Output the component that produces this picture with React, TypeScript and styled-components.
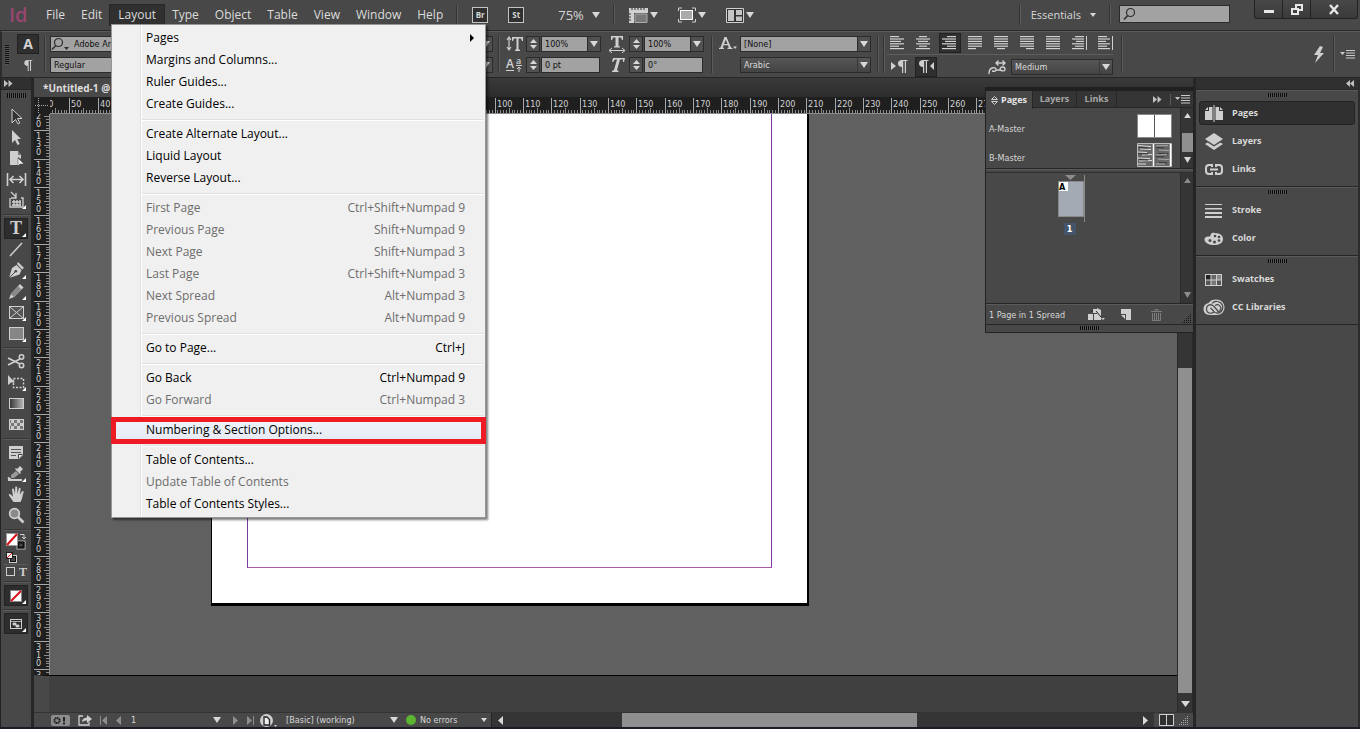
import React from "react";
import styled, { createGlobalStyle, css } from "styled-components";

const ui = `"Open Sans", "Noto Sans", sans-serif`;
const small = `"DejaVu Sans Condensed", "DejaVu Sans", sans-serif`;

const GlobalStyle = createGlobalStyle`
  * { box-sizing: border-box; }
  body { margin: 0; background: #484848; }
  button, input, select { font: inherit; color: inherit; margin: 0; padding: 0; border: 0; background: none; border-radius: 0; }
  button { display: flex; align-items: center; justify-content: center; }
  svg { display: block; flex: none; overflow: visible; }
`;

const App_ = styled.div`
  position: relative;
  display: flex;
  flex-direction: column;
  min-height: 100vh;
  background: #484848;
  color: #d6d6d6;
  font: 12px/16px ${ui};
  overflow: hidden;
  border-bottom: 2px solid #1b1c26;
`;

/* ---------- menu bar ---------- */
const MenuBar = styled.header`
  display: flex;
  align-items: center;
  height: 31px;
  border-bottom: 1px solid #2a2a2a;
`;
const Logo = styled.div`
  width: 38px;
  padding-left: 9px;
  font: 600 20px/28px "Open Sans", sans-serif;
  color: #97476f;
`;
const MenuButton = styled.button<{ $open?: boolean }>`
  height: 20px;
  padding: 0 8px;
  color: #dcdcdc;
  ${(p) => p.$open && css`background: #303030; box-shadow: 0 0 0 1px #272727;`}
`;
const Divider = styled.span<{ $h?: number; $m?: string }>`
  flex: none;
  width: 2px;
  height: ${(p) => p.$h ?? 20}px;
  margin: ${(p) => p.$m ?? "0"};
  background: linear-gradient(to right, #343434 50%, #5c5c5c 50%);
`;
const AppBadge = styled.button`
  width: 16px;
  height: 16px;
  margin-right: 20px;
  border: 1px solid #c4c4c4;
  background: #303030;
  font: 700 8px/12px ${ui};
`;
const BarButton = styled.button`
  height: 20px;
  margin-right: 20px;
  gap: 2px;
`;
const Zoom = styled.button`
  gap: 8px;
  height: 20px;
  margin: 0 13px 0 14px;
  font-size: 13px;
`;
const Spacer = styled.div`
  flex: 1;
`;
const Workspace = styled.button`
  gap: 9px;
  height: 20px;
  margin: 0 13px 0 10px;
  font-size: 11px;
`;
const SearchBox = styled.label`
  display: flex;
  align-items: center;
  width: 111px;
  height: 18px;
  margin: 0 24px 3px 8px;
  padding-left: 3px;
  background: #a2a2a2;
  border: 1px solid #2b2b2b;
  input { flex: 1; min-width: 0; height: 14px; color: #111; outline: 0; }
`;
const WindowButtons = styled.div`
  display: flex;
  align-self: flex-start;
  width: 104px;
  height: 19px;
  margin-right: 2px;
  border: 1px solid #222;
  border-top: 0;
  border-radius: 0 0 3px 3px;
  background: linear-gradient(#484848, #3a3a3a);
  button { flex: 27; height: 18px; border-left: 1px solid #222; }
  button:first-child { border-left: 0; }
  button:last-child { flex: 46; }
`;

/* ---------- control bar ---------- */
const ControlBar = styled.section`
  display: flex;
  align-items: center;
  height: 47px;
  border-top: 1px solid #5a5a5a;
  border-bottom: 1px solid #262626;
  border-left: 2px solid #2c2c2c;
  font: 9px/12px ${small};
`;
const Stack = styled.div<{ $w?: number; $gap?: number; $ml?: number }>`
  display: flex;
  flex-direction: column;
  flex: none;
  gap: ${(p) => p.$gap ?? 5}px;
  width: ${(p) => (p.$w ? `${p.$w}px` : "auto")};
  margin-left: ${(p) => p.$ml ?? 0}px;
`;
const Line = styled.div`
  display: flex;
  align-items: center;
  height: 16px;
`;
const Glyph = styled.span<{ $w: number }>`
  display: flex;
  flex: none;
  justify-content: center;
  width: ${(p) => p.$w}px;
`;
const GripV = styled.span`
  width: 4px;
  height: 20px;
  margin: 0 8px 0 3px;
  background: repeating-linear-gradient(#111 0 1px, #555 1px 2px);
`;
const ModeButton = styled.button<{ $on?: boolean; $w?: number }>`
  flex: none;
  width: ${(p) => p.$w ?? 22}px;
  height: 20px;
  font: 700 14px/18px ${ui};
  color: #d2d2d2;
  ${(p) => p.$on && css`background: #2f2f2f; border: 1px solid #222;`}
`;
const Field = styled.span<{ $w: number; $dark?: boolean }>`
  position: relative;
  display: flex;
  flex: none;
  align-items: center;
  width: ${(p) => p.$w}px;
  height: 16px;
  border: 1px solid #2b2b2b;
  color: ${(p) => (p.$dark ? "#dcdcdc" : "#101010")};
  background: ${(p) => (p.$dark ? "linear-gradient(#565656, #444)" : "#a2a2a2")};
  input, select { appearance: none; flex: 1; min-width: 0; height: 14px; padding: 0 3px; outline: 0; }
`;
const DropArrow = styled.span<{ $dark?: boolean }>`
  display: flex;
  align-items: center;
  justify-content: center;
  width: 13px;
  height: 14px;
  border-left: 1px solid ${(p) => (p.$dark ? "#3a3a3a" : "#2b2b2b")};
  background: ${(p) => (p.$dark ? "none" : "#505050")};
  pointer-events: none;
`;
const Stepper = styled.span`
  display: flex;
  align-items: center;
  justify-content: center;
  width: 14px;
  height: 16px;
  margin-right: 1px;
  border: 1px solid #2b2b2b;
  background: #505050;
`;
const AlignBlock = styled.div`
  display: flex;
  flex-direction: column;
  flex: none;
  width: 230px;
  margin-left: 2px;
`;
const AlignRow = styled.div`
  display: flex;
  align-items: center;
  height: 21px;
  gap: 4px;
`;
const RowRule = styled.hr`
  width: 226px;
  height: 1px;
  margin: 1px 0;
  border: 0;
  background: #5e5e5e;
`;

/* ---------- work area ---------- */
const Body = styled.div`
  display: flex;
  flex: 1;
`;
const Tools = styled.nav`
  display: flex;
  flex-direction: column;
  align-items: center;
  flex: none;
  width: 34px;
  border-left: 1px solid #222;
  border-right: 3px solid #262626;
`;
const PanelHead = styled.div<{ $end?: boolean }>`
  display: flex;
  align-items: center;
  align-self: stretch;
  justify-content: ${(p) => (p.$end ? "flex-end" : "flex-start")};
  height: 12px;
  padding: 0 3px;
  background: #303030;
  border-bottom: 1px solid #262626;
`;
const GripH = styled.span`
  display: block;
  width: 19px;
  height: 5px;
  margin: 3px auto;
  background: repeating-linear-gradient(to right, #0c0c0c 0 1px, #555 1px 2px);
`;
const ToolGap = styled.span`
  height: 5px;
`;
const ToolRule = styled.hr`
  width: 27px;
  height: 2px;
  margin: 3px 0 2px;
  border: 0;
  background: linear-gradient(#373737 50%, #5a5a5a 50%);
`;
const ToolButton = styled.button<{ $on?: boolean }>`
  width: 24px;
  height: 21px;
  ${(p) => p.$on && css`background: #2d2d2d; border: 1px solid #222;`}
`;
const ColorTools = styled.div`
  display: flex;
  flex-direction: column;
  align-items: center;
`;
const Doc = styled.main`
  display: flex;
  flex-direction: column;
  flex: 1;
  min-width: 0;
`;
const TabBar = styled.div`
  display: flex;
  height: 19px;
  background: linear-gradient(#3a3a3a, #2c2c2c);
`;
const DocTab = styled.button`
  width: 300px;
  height: 19px;
  padding-left: 9px;
  justify-content: flex-start;
  background: #484848;
  font: 700 10px/18px ${ui};
  color: #dedede;
  white-space: nowrap;
`;
const RulerRow = styled.div`
  display: flex;
  height: 17px;
  background: #1f1f1f;
`;
const Corner = styled.div`
  flex: none;
  width: 16px;
  height: 17px;
`;
const HRuler = styled.div`
  flex: 1;
  min-width: 0;
  overflow: hidden;
  border-bottom: 1px solid #8c8c8c;
  svg { width: 100%; }
`;
const CanvasRow = styled.div`
  display: flex;
  flex: 1;
`;
const DocColumn = styled.div`
  display: flex;
  flex-direction: column;
  flex: 1;
  min-width: 0;
`;
const VRuler = styled.div`
  position: relative;
  flex: none;
  width: 16px;
  overflow: hidden;
  background: #1f1f1f;
  border-right: 1px solid #8c8c8c;
  svg { position: absolute; }
`;
const Canvas = styled.div`
  position: relative;
  flex: 1;
  min-height: 520px;
  overflow: hidden;
  background: #606060;
`;
const PageSheet = styled.div`
  position: absolute;
  left: 161px;
  top: 0;
  width: 598px;
  height: 492px;
  padding: 0 35px 35px 35px;
  background: #fff;
  border: solid #000;
  border-width: 0 2px 3px 1px;
`;
const MarginGuide = styled.div`
  height: 100%;
  border: 1px solid #7d3c9c;
  border-bottom-color: #a95aa9;
  border-top: 0;
`;
const Below = styled.div`
  height: 37px;
  border-left: 15px solid #484848;
  border-top: 1px solid #000;
  background: #404040;
`;
const VScroll = styled.div`
  display: flex;
  flex-direction: column;
  align-items: center;
  flex: none;
  width: 16px;
  padding-bottom: 5px;
  background: #353535;
  border-left: 1px solid #2a2a2a;
  border-right: 1px solid #2a2a2a;
`;
const VThumb = styled.div`
  width: 14px;
  height: 325px;
  margin: auto 0 8px;
  background: #8f8f8f;
`;
const StatusBar = styled.footer`
  display: flex;
  align-items: center;
  height: 15px;
  padding-left: 16px;
  border-top: 1px solid #333;
  font: 9px/12px ${small};
  button { height: 14px; }
`;
const StatusSelect = styled.span<{ $w: number }>`
  display: flex;
  flex: none;
  align-items: center;
  width: ${(p) => p.$w}px;
  select { appearance: none; flex: 1; min-width: 0; outline: 0; }
`;
const StatusIcon = styled.button<{ $w: number }>`
  flex: none;
  width: ${(p) => p.$w}px;
`;
const GreenDot = styled.span`
  width: 10px;
  height: 10px;
  margin-right: 4px;
  border-radius: 50%;
  background: #5cb531;
`;
const HScroll = styled.div`
  display: flex;
  align-items: center;
  flex: 1;
  height: 14px;
  padding: 0 4px;
  background: #353535;
  border-left: 1px solid #222;
`;
const HTrack = styled.div`
  display: flex;
  flex: 1;
  height: 14px;
  margin: 0 4px;
`;
const HThumb = styled.div`
  flex: 0 0 47%;
  margin-left: 18%;
  background: #8f8f8f;
`;

/* ---------- right dock ---------- */
const Dock = styled.aside`
  flex: none;
  width: 167px;
  border-left: 3px solid #262626;
  border-right: 2px solid #2c2c2c;
`;
const DockGroup = styled.section`
  display: flex;
  flex-direction: column;
  padding-bottom: 3px;
  border-top: 1px solid #5a5a5a;
  border-bottom: 1px solid #262626;
  > span { margin: 2px auto; height: 4px; }
`;
const DockItem = styled.button<{ $on?: boolean }>`
  width: calc(100% - 6px);
  height: 24px;
  margin: 2px 3px;
  padding-left: 4px;
  gap: 8px;
  justify-content: flex-start;
  border: 1px solid transparent;
  border-radius: 3px;
  font: 700 9px/20px ${ui};
  color: #dadada;
  ${(p) => p.$on && css`background: #303030; border-color: #232323;`}
`;

/* ---------- floating Pages panel ---------- */
const PagesPanel = styled.section`
  position: absolute;
  top: 87px;
  right: 166px;
  width: 209px;
  border: 1px solid #222;
  border-top: 4px solid #202020;
  background: #484848;
  font: 9px/12px ${small};
`;
const PanelTabs = styled.div`
  display: flex;
  align-items: center;
  height: 17px;
  background: #353535;
  border-bottom: 1px solid #262626;
`;
const PanelTab = styled.button<{ $on?: boolean; $w: number }>`
  width: ${(p) => p.$w}px;
  height: 17px;
  gap: 3px;
  border-right: 1px solid #262626;
  font: 700 9px/16px ${ui};
  color: ${(p) => (p.$on ? "#e6e6e6" : "#a8a8a8")};
  ${(p) => p.$on && css`background: #484848; align-self: flex-start; height: 18px;`}
`;
const PanelPane = styled.div<{ $h: number }>`
  display: flex;
  height: ${(p) => p.$h}px;
  border-bottom: 1px solid #262626;
`;
const MasterList = styled.ul`
  display: flex;
  flex: 1;
  flex-direction: column;
  gap: 5px;
  margin: 0;
  padding: 6px 8px 0 3px;
  list-style: none;
  li { display: flex; align-items: center; justify-content: space-between; height: 24px; }
  span { padding-top: 5px; }
`;
const PanelScroll = styled.div`
  display: flex;
  flex-direction: column;
  align-items: center;
  justify-content: space-between;
  width: 13px;
  padding: 5px 0;
  background: #353535;
  border-left: 1px solid #2a2a2a;
`;
const PanelThumb = styled.div`
  width: 11px;
  height: 19px;
  margin-top: 9px;
  background: #8f8f8f;
`;
const PanelSplit = styled.div`
  height: 4px;
  border-bottom: 1px solid #303030;
  border-top: 1px solid #5a5a5a;
`;
const SpreadArea = styled.div`
  display: flex;
  flex: 1;
  flex-direction: column;
  align-items: center;
  padding: 2px 23px 0 0;
`;
const PageNumber = styled.span`
  width: 12px;
  height: 12px;
  margin: 1px 4px 0 0;
  background: #44546a;
  font: 700 9px/12px ${small};
  color: #fff;
  text-align: center;
`;
const PanelFoot = styled.div`
  display: flex;
  align-items: center;
  height: 20px;
  padding: 0 1px 0 3px;
  border-top: 1px solid #5a5a5a;
  button { height: 18px; width: 30px; }
`;
const SpreadInfo = styled.span`
  flex: 1;
  white-space: nowrap;
`;
const FootEnd = styled.span`
  display: flex;
  align-self: flex-end;
  margin-left: 10px;
`;
const PanelGrip = styled.div`
  height: 8px;
  border-top: 1px solid #262626;
  padding-top: 1px;
  > span { margin: 0 auto; height: 4px; }
`;

/* ---------- drop-down menu ---------- */
const Menu = styled.div`
  position: absolute;
  top: 24px;
  left: 111px;
  width: 375px;
  padding: 2px;
  border: 1px solid #979797;
  background: linear-gradient(to right, transparent 28px, #e0e0e0 28px 29px, #fff 29px 30px, transparent 30px) #f0f0f0;
  box-shadow: 2px 2px 2px rgba(0, 0, 0, 0.5);
  color: #000;
`;
const MenuItem = styled.button<{ $hot?: boolean }>`
  width: 100%;
  height: 22px;
  padding: 0 18px 0 32px;
  justify-content: space-between;
  &:disabled { color: #6d6d6d; }
  ${(p) => p.$hot && css`position: relative; background: linear-gradient(#f0f3f9, #e4eaf5);`}
`;
const SubArrow = styled.span`
  display: flex;
  margin-right: -10px;
`;
const MenuRule = styled.hr`
  height: 2px;
  margin: 4px 0 2px 28px;
  border: 0;
  background: linear-gradient(#e0e0e0 50%, #fff 50%);
`;
const Highlight = styled.span`
  position: absolute;
  inset: -2px -3px -3px -3px;
  border: 5px solid #ed1c24;
`;

/* ---------- small drawings ---------- */
const Down = ({ w = 8, c = "#d8d8d8" }: { w?: number; c?: string }) => (
  <svg width={w} height={w > 6 ? 6 : 4} viewBox="0 0 8 6" preserveAspectRatio="none"><path d="M0 0h8L4 6z" fill={c} /></svg>
);
const Up = ({ c = "#d8d8d8" }: { c?: string }) => (
  <svg width="7" height="5" viewBox="0 0 8 6"><path d="M0 6h8L4 0z" fill={c} /></svg>
);
const Side = ({ left, bar, c = "#d8d8d8" }: { left?: boolean; bar?: boolean; c?: string }) => (
  <svg width="9" height="9" viewBox="0 0 9 9" fill={c}>
    {left ? <path d="M7 0v9L2 4.500z" /> : <path d="M2 0v9l5-4.500z" />}
    {bar && (left ? <path d="M0 0h1v9H0z" /> : <path d="M8 0h1v9H8z" />)}
  </svg>
);
const Chevrons = ({ left }: { left?: boolean }) => (
  <svg width="9" height="7" viewBox="0 0 9 7" fill="#c2c2c2">
    <path d={left ? "M4 0v7L0 3.500zM8 0v7L4 3.500z" : "M0 0v7l4-3.500zM4.500 0v7l4-3.500z"} />
  </svg>
);
const PanelMenuIcon = () => (
  <svg width="15" height="9" viewBox="0 0 15 9" fill="#c9c9c9">
    <path d="M0 2h5L2.500 5zM6 0h9v1H6zM6 2.500h9v1H6zM6 5h9v1H6zM6 7.500h9v1H6z" />
  </svg>
);
const StepIcon = () => (
  <svg width="7" height="12" viewBox="0 0 7 12" fill="#d8d8d8"><path d="M0 5h7L3.500 1zM0 7h7l-3.500 4z" /></svg>
);
const Magnifier = ({ arrow }: { arrow?: boolean }) => (
  <svg width={arrow ? 20 : 14} height="14" viewBox={arrow ? "0 0 20 14" : "0 0 14 14"} fill="none" stroke="#2c2c2c" strokeWidth="1.200">
    <circle cx="7.500" cy="5.500" r="4" />
    <path d="M4.800 8.500L1 12.500" strokeWidth="1.500" />
    {arrow && <path d="M13 10h5l-2.500 3z" fill="#2c2c2c" stroke="none" />}
  </svg>
);
const Resize = ({ c = "#151515" }: { c?: string }) => (
  <svg width="11" height="11" viewBox="0 0 11 11" fill={c} stroke="none">
    {[0, 1, 2, 3, 4].map((r) => Array.from({ length: r + 1 }, (_, i) => <rect key={`${r}-${i}`} x={9 - i * 2} y={r * 2 + 1} width="1" height="1" />))}
  </svg>
);

const alignWidths: Record<string, number[]> = {
  left: [9, 14, 11, 14, 9, 14],
  center: [8, 14, 10, 14, 8, 14],
  right: [9, 14, 11, 14, 9, 14],
  jleft: [14, 14, 14, 14, 14, 8],
  jcenter: [14, 14, 14, 14, 14, 8],
  jright: [14, 14, 14, 14, 14, 8],
  full: [14, 14, 14, 14, 14, 14],
  towards: [9, 12, 8, 12, 9, 12],
  away: [9, 12, 8, 12, 9, 12],
};
const AlignIcon = ({ kind }: { kind: string }) => (
  <svg width="16" height="14" viewBox="0 0 16 14" fill="#d0d0d0">
    {alignWidths[kind].map((w, i) => {
      const x = kind.includes("center") ? (14 - w) / 2 : kind === "right" || kind === "jright" ? 14 - w : kind === "towards" ? 12 - w : 0;
      return <rect key={i} x={x} y={i * 2.4} width={w} height="1.200" />;
    })}
    {(kind === "towards" || kind === "away") && <rect x="14" y="0" width="1" height="14" />}
  </svg>
);

const ink = "#cfcfcf";
const toolIcons: Record<string, React.ReactNode> = {
  Selection: <path d="M7 3v14l3.500-3.500L13 18l1.800-1L12.500 12.500H17z" fill="#333" stroke={ink} />,
  "Direct Selection": <path d="M7 3v13l3-3 2.500 5 2.200-1L12.300 12H16z" fill={ink} />,
  Page: <><path d="M5 3h8l3 4v4l-3-2v8H5z" fill={ink} /><path d="M13 3l3 4h-3z" fill="#777" /><path d="M13 10v8l2-2h4z" fill="#eee" stroke="#444" strokeWidth=".500" /></>,
  Gap: <path d="M2.500 4v13M20.500 4v13M5 10.500h13M8.500 7L5 10.500 8.500 14M14.500 7l3.500 3.500-3.500 3.500" fill="none" stroke={ink} strokeWidth="1.600" />,
  "Content Collector": <path d="M6 2l5 5M11 3v5H6M5 8v9h13V8h-2M7 12h9M7 15h9M9 10v6M12 10v6M15 10v6" fill="none" stroke={ink} strokeWidth="1.300" />,
  Type: <text x="11" y="16" textAnchor="middle" fontFamily="Liberation Serif, serif" fontSize="18" fontWeight="700" fill={ink}>T</text>,
  Line: <path d="M5 17L17 4" stroke={ink} strokeWidth="1.500" />,
  Pen: <><path d="M13 2l6 6-2 1.500-5-5.500z" fill={ink} /><path d="M11.500 5l5 5-2 4.500L4 18 7 8z" fill={ink} /><path d="M4 18l6-6" stroke="#444" /><circle cx="10.800" cy="11.200" r="1.300" fill="#444" /></>,
  Pencil: <><path d="M15 3l3.500 3.500L9 16l-5 2 2-5z" fill={ink} /><path d="M13 5l3.500 3.500L9 16l-3.500-3z" fill="#8a8a8a" /></>,
  "Rectangle Frame": <><rect x="4.500" y="4.500" width="14" height="12" fill="#555" stroke={ink} /><path d="M5 5l13 11M18 5L5 16" stroke={ink} /></>,
  Rectangle: <rect x="4.500" y="4.500" width="14" height="12" fill="#868686" stroke={ink} />,
  Scissors: <g fill="none" stroke={ink} strokeWidth="1.600"><path d="M3 7l12 6M3 14l12-6" /><circle cx="16.500" cy="6" r="2.200" /><circle cx="16.500" cy="14.500" r="2.200" /></g>,
  "Free Transform": <><rect x="8.500" y="6.500" width="10" height="9" fill="none" stroke={ink} strokeWidth="1.500" strokeDasharray="2 1.500" /><path d="M3 3v10l3-2.500h4z" fill={ink} /></>,
  "Gradient Swatch": <><rect x="4.500" y="5.500" width="14" height="10" fill="url(#grad)" stroke={ink} /></>,
  "Gradient Feather": <><rect x="4" y="5" width="15" height="11" fill="#777" /><rect x="4" y="5" width="15" height="11" fill="url(#check)" /><rect x="4.500" y="5.500" width="14" height="10" fill="none" stroke={ink} /></>,
  Note: <><path d="M4 4h14v9l-4 4H4z" fill={ink} /><path d="M6 7.500h10M6 10.500h10M6 13.500h5" stroke="#555" /><path d="M13 17v-5h5z" fill="#444" /><path d="M14 16v-3h3z" fill="#eee" /></>,
  Eyedropper: <><path d="M15 3l3 3-3 3 1 1-1 1-5-5 1-1 1 1z" fill={ink} /><path d="M11 8l3 3-5 4H6v-3z" fill="#999" /><path d="M3 17h14M3 14.500l3 2.500" stroke={ink} strokeWidth="2" /></>,
  Hand: <path d="M8.500 18L4 11.500c-1-1.500 1-2 2-.800l2 2L7 5.500c0-1.300 1.800-1.300 2 0l1 4.500.200-6.500c0-1.200 2-1.200 2 0l.300 6.500 1.300-5.500c.300-1.200 2-.800 1.800.400L15 10.500l2-3c.800-1 2-.300 1.600.800C17.500 11 17.500 15 15.500 18z" fill={ink} />,
  Zoom: <><circle cx="9.500" cy="8.500" r="4.800" fill="#8a8a8a" stroke={ink} strokeWidth="1.800" /><path d="M13 12l5.500 5.500" stroke={ink} strokeWidth="2.600" /></>,
};
const flyouts = ["Content Collector", "Type", "Pen", "Pencil", "Rectangle Frame", "Rectangle", "Free Transform", "Eyedropper"];
const toolGroups = [
  ["Selection", "Direct Selection", "Page", "Gap", "Content Collector"],
  ["Type", "Line", "Pen", "Pencil", "Rectangle Frame", "Rectangle"],
  ["Scissors", "Free Transform", "Gradient Swatch", "Gradient Feather"],
  ["Note", "Eyedropper", "Hand", "Zoom"],
];
const ToolIcon = ({ name }: { name: string }) => (
  <svg width="22" height="21" viewBox="0 0 22 21">
    {toolIcons[name]}
    {flyouts.includes(name) && <path d="M21 15v4h-4z" fill="#fff" />}
  </svg>
);
const DefsSvg = styled.svg`
  position: absolute;
`;
const Defs = () => (
  <DefsSvg width="0" height="0">
    <defs>
      <linearGradient id="grad"><stop offset="0" stopColor="#333" /><stop offset="1" stopColor="#bbb" /></linearGradient>
      <pattern id="check" width="6" height="6" patternUnits="userSpaceOnUse"><path d="M0 0h3v3H0zM3 3h3v3H3z" fill="#ccc" /></pattern>
    </defs>
  </DefsSvg>
);
const NoneSwatch = () => (
  <svg width="22" height="20" viewBox="0 0 22 20">
    <rect x="5.500" y="4.500" width="11" height="11" fill="#fff" stroke="#888" /><path d="M6 15L16 5" stroke="#d80f16" strokeWidth="2" /><path d="M21 14v4h-4z" fill="#fff" />
  </svg>
);

const MM = 2.835;
const tickShape = (m: number) => (m % 10 === 0 ? 15 : m % 5 === 0 ? 5 : 3);
const HorizontalTicks = () => {
  const marks = Array.from({ length: 420 }, (_, i) => i - 60);
  return (
    <svg height="16" shapeRendering="crispEdges">
      {marks.map((m) => {
        const x = Math.round(162 + m * MM) - 1;
        const h = tickShape(m);
        return <rect key={m} x={x} y={16 - h} width="1" height={h} fill={h > 10 ? "#a8a8a8" : "#8c8c8c"} />;
      })}
      {marks.filter((m) => m % 10 === 0).map((m) => (
        <text key={m} x={Math.round(162 + m * MM) + 1} y="10" fontFamily="DejaVu Sans Condensed, sans-serif" fontSize="9" fill="#d2d2d2">{Math.abs(m)}</text>
      ))}
    </svg>
  );
};
const VerticalTicks = () => {
  const marks = Array.from({ length: 202 }, (_, i) => i + 120);
  const y = (m: number) => Math.round(470 + (m - 290) * MM);
  return (
    <svg width="15" height="562" shapeRendering="crispEdges">
      {marks.map((m) => {
        const h = tickShape(m);
        return <rect key={m} x={15 - h} y={y(m)} width={h} height="1" fill={h > 10 ? "#a8a8a8" : "#8c8c8c"} />;
      })}
      {marks.filter((m) => m % 10 === 0).map((m) => String(m).split("").map((d, i) => (
        <text key={`${m}-${i}`} x="2" y={y(m) + 9 + i * 8} fontFamily="DejaVu Sans Condensed, sans-serif" fontSize="9" fill="#d2d2d2">{d}</text>
      )))}
    </svg>
  );
};

type Entry = { label: string; keys?: string; off?: boolean; sub?: boolean; hot?: boolean };
const menuGroups: Entry[][] = [
  [{ label: "Pages", sub: true }, { label: "Margins and Columns..." }, { label: "Ruler Guides..." }, { label: "Create Guides..." }],
  [{ label: "Create Alternate Layout..." }, { label: "Liquid Layout" }, { label: "Reverse Layout..." }],
  [
    { label: "First Page", keys: "Ctrl+Shift+Numpad 9", off: true },
    { label: "Previous Page", keys: "Shift+Numpad 9", off: true },
    { label: "Next Page", keys: "Shift+Numpad 3", off: true },
    { label: "Last Page", keys: "Ctrl+Shift+Numpad 3", off: true },
    { label: "Next Spread", keys: "Alt+Numpad 3", off: true },
    { label: "Previous Spread", keys: "Alt+Numpad 9", off: true },
  ],
  [{ label: "Go to Page...", keys: "Ctrl+J" }],
  [{ label: "Go Back", keys: "Ctrl+Numpad 9" }, { label: "Go Forward", keys: "Ctrl+Numpad 3", off: true }],
  [{ label: "Numbering & Section Options...", hot: true }],
  [{ label: "Table of Contents..." }, { label: "Update Table of Contents", off: true }, { label: "Table of Contents Styles..." }],
];
const LayoutMenu = () => (
  <Menu role="menu" aria-label="Layout">
    {menuGroups.map((group, g) => (
      <React.Fragment key={g}>
        {g > 0 && <MenuRule />}
        {group.map((e) => (
          <MenuItem key={e.label} role="menuitem" disabled={e.off} $hot={e.hot}>
            <span>{e.label}</span>
            {e.keys && <span>{e.keys}</span>}
            {e.sub && <SubArrow><svg width="5" height="8" viewBox="0 0 5 8"><path d="M0 0v8l4-4z" fill="#000" /></svg></SubArrow>}
            {e.hot && <Highlight />}
          </MenuItem>
        ))}
      </React.Fragment>
    ))}
  </Menu>
);

const Picker = ({ label, value, w, dark }: { label: string; value: string; w: number; dark?: boolean }) => (
  <Field $w={w} $dark={dark}>
    <select aria-label={label} defaultValue={value}><option>{value}</option></select>
    <DropArrow $dark={dark}><Down /></DropArrow>
  </Field>
);
const Amount = ({ label, value, drop }: { label: string; value: string; drop?: boolean }) => (
  <>
    <Stepper><StepIcon /></Stepper>
    <Field $w={drop ? 60 : 59}>
      <input aria-label={label} defaultValue={value} />
      {drop && <DropArrow><Down /></DropArrow>}
    </Field>
  </>
);

const Pilcrow = ({ flip }: { flip?: boolean }) => (
  <svg width="17" height="13" viewBox="0 0 17 13" fill={ink}>
    {flip ? <path d="M16 2v8l-4-4z" /> : <path d="M0 2v8l5-4z" />}
    <path transform={flip ? "translate(-6 0)" : ""} d="M16.500 0v1H15v12h-1.200V1h-1.600v12H11V7C8.500 7 7 5.500 7 3.500S8.500 0 11 0z" />
  </svg>
);

const dockIcons: Record<string, React.ReactNode> = {
  Pages: <path d="M1 6l3-3v3zM5 3h3.500v13H1V7h4zM19 6l-3-3v3zM15 3h-3.500v13H19V7h-4zM9.500 1h1v17h-1z" fill={ink} />,
  Layers: <path d="M10 1l9 6-9 6-9-6zM3.500 10.500l6.500 4 6.500-4 2.500 1.500-9 6-9-6z" fill={ink} />,
  Links: <path d="M8 7V5H5Q2 5 2 8v3q0 3 3 3h3v-2M12 7V5h3q3 0 3 3v3q0 3-3 3h-3v-2M6 9.500h8" fill="none" stroke={ink} strokeWidth="2" />,
  Stroke: <path d="M1 3h17v1H1zM1 7h17v1.500H1zM1 11h17v2H1zM1 15h17v2H1z" fill={ink} />,
  Color: <><path d="M8 4c2-1 3 .500 5 .200 4 .500 6 3 6 5.800 0 4-4 6-9 6s-9.500-2-9.500-5.500C.500 8 3 7 5 7.500 7 8 6 5 8 4z" fill={ink} /><g fill="#484848"><circle cx="11" cy="7" r="1.300" /><circle cx="15" cy="8" r="1.300" /><circle cx="15" cy="11.500" r="1.300" /><circle cx="10.500" cy="13" r="1.500" /><circle cx="6" cy="11.500" r="1.500" /></g></>,
  Swatches: <><path d="M1 4h17v12H1z" fill={ink} /><path d="M2 5h4.500v4.500H2z" fill="#222" /><path d="M7.500 5H12v4.500H7.500z" fill="#666" /><path d="M13 5h4v4.500h-4z" fill="#888" /><path d="M2 10.500h4.500V15H2zM13 10.500h4V15h-4z" fill="#555" /><path d="M7.500 10.500H12V15H7.500z" fill="#777" /></>,
  "CC Libraries": <><path d="M6 17C1.500 17 -.500 14 -.500 11s2-5.500 5-6C6 2.500 9 1.500 12 1.500c5 0 8.500 3.500 8.500 8 0 4.500-3.500 7.500-7.500 7.500z" fill={ink} /><g fill="none" stroke="#484848" strokeWidth="1.200"><path d="M10 14Q8 15.500 6 15.200A4.400 4.400 0 0 1 6 6.600Q8.500 6.600 10 8.500l4 4.500M8 5.500Q10 3 13 3.500a5.800 5.800 0 0 1 0 11.700Q11 15 9.500 13L6.500 9.800" /><path d="M11 7.500Q14 5.500 16 8t0 4.500-3 1.200" /></g></>,
};
const dockGroups = [["Pages", "Layers", "Links"], ["Stroke", "Color"], ["Swatches", "CC Libraries"]];

export default function App() {
  return (
    <App_>
      <GlobalStyle />
      <Defs />
      <MenuBar>
        <Logo>Id</Logo>
        {["File", "Edit", "Layout", "Type", "Object", "Table", "View", "Window", "Help"].map((m) => (
          <MenuButton key={m} $open={m === "Layout"}>{m}</MenuButton>
        ))}
        <Divider $m="0 14px 0 5px" />
        <AppBadge aria-label="Bridge">Br</AppBadge>
        <AppBadge aria-label="Stock">St</AppBadge>
        <Zoom>75%<Down /></Zoom>
        <Divider $m="0 14px 0 0" />
        <BarButton aria-label="View Options">
          <svg width="19" height="15" viewBox="0 0 19 15"><path d="M0 0h19v5H5v10H0z" fill="#d0d0d0" /><path d="M3 0v2M6 0v2M9 0v2M12 0v2M15 0v2M0 6h2M0 9h2M0 12h2" stroke="#333" /><path d="M6 6h12v8.500H6z" fill="#777" stroke="#aaa" /></svg>
          <Down />
        </BarButton>
        <BarButton aria-label="Screen Mode">
          <svg width="18" height="16" viewBox="0 0 18 16" fill="none" stroke="#d0d0d0"><path d="M.500 4V1H4M14 1h3.500v3M.500 12v3H4M14 15h3.500v-3" /><rect x="2.500" y="3.500" width="12" height="9" fill="#aaa" stroke="#fff" /></svg>
          <Down />
        </BarButton>
        <BarButton aria-label="Arrange Documents">
          <svg width="18" height="15" viewBox="0 0 18 15"><path d="M.500.500h17v14H.500z" fill="#333" stroke="#d0d0d0" /><path d="M2 2h6v11H2zM10 2h6v5h-6zM10 8.500h6V13h-6z" fill="#c4c4c4" /></svg>
          <Down />
        </BarButton>
        <Spacer />
        <Divider />
        <Workspace>Essentials<Down w={6} /></Workspace>
        <Divider />
        <SearchBox><Magnifier /><input aria-label="Search" /></SearchBox>
        <WindowButtons>
          <button aria-label="Minimize"><svg width="10" height="12"><path d="M0 7h10v3H0z" fill="#e6e6e6" /></svg></button>
          <button aria-label="Restore"><svg width="12" height="11" viewBox="0 0 12 11" fill="none" stroke="#e6e6e6" strokeWidth="2"><path d="M5 4V1h6v5H8M1 5h6v5H1z" /></svg></button>
          <button aria-label="Close"><svg width="10" height="9" viewBox="0 0 10 9"><path d="M1 0l8 9M9 0L1 9" stroke="#e6e6e6" strokeWidth="2.400" /></svg></button>
        </WindowButtons>
      </MenuBar>

      <ControlBar>
        <GripV />
        <Stack $gap={1}>
          <ModeButton $on>A</ModeButton>
          <ModeButton aria-label="Paragraph Formatting">
            <svg width="9" height="11" viewBox="7 0 10 13" fill={ink}><path d="M16.500 0v1H15v12h-1.200V1h-1.600v12H11V7C8.500 7 7 5.500 7 3.500S8.500 0 11 0z" /></svg>
          </ModeButton>
        </Stack>
        <Divider $h={37} $m="0 4px 0 5px" />
        <Stack $w={443}>
          <Field $w={443}>
            <Magnifier arrow />
            <input aria-label="Font" defaultValue="Adobe Arabic" />
            <DropArrow><Down /></DropArrow>
          </Field>
          <Picker label="Font Style" value="Regular" w={443} />
        </Stack>
        <Divider $h={37} $m="0 4px 0 5px" />
        <Stack>
          <Line>
            <Glyph $w={22}><svg width="18" height="16" viewBox="0 0 18 16"><path d="M3 1v13M1 4l2-3 2 3M1 11l2 3 2-3" fill="none" stroke={ink} strokeWidth="1.200" /><path d="M6 1h11v4h-1l-1-2.500h-2.500V13l1.500 1v1H9v-1l1.500-1V2.500H8L7 5H6z" fill={ink} /></svg></Glyph>
            <Amount label="Vertical Scale" value="100%" drop />
          </Line>
          <Line>
            <Glyph $w={22}><svg width="18" height="16" viewBox="0 0 18 16"><text x="0" y="11" fontFamily="Open Sans, sans-serif" fontSize="12" fontWeight="600" fill={ink}>A</text><text x="10" y="7" fontFamily="Open Sans, sans-serif" fontSize="9" fontWeight="600" fill={ink}>a</text><path d="M0 13.500h8M10 8.500h6M13 15v-5M11 12l2-2 2 2" fill="none" stroke={ink} /></svg></Glyph>
            <Amount label="Baseline Shift" value="0 pt" />
          </Line>
        </Stack>
        <Stack $ml={3}>
          <Line>
            <Glyph $w={25}><svg width="18" height="17" viewBox="0 0 18 17"><path d="M3 0h12v4h-1l-1-2.500h-2.500V10l1.500.500v1H6v-1l1.500-.500V1.500H5L4 4H3z" fill={ink} /><path d="M1 14.500h16M4 12l-3 2.500L4 17M14 12l3 2.500-3 2.500" fill="none" stroke={ink} /></svg></Glyph>
            <Amount label="Horizontal Scale" value="100%" drop />
          </Line>
          <Line>
            <Glyph $w={25}><svg width="18" height="16" viewBox="0 0 18 16"><path d="M5 1h12l-1 4h-1V2.500h-3L9 13l1.500 1v1H4v-1l2-1L9 2.500H7L5 5H4z" fill={ink} /></svg></Glyph>
            <Amount label="Skew" value="0°" />
          </Line>
        </Stack>
        <Divider $h={37} $m="0 3px 0 7px" />
        <Stack>
          <Line>
            <Glyph $w={24}><svg width="19" height="14" viewBox="0 0 19 14" fill={ink}><path d="M0 12v-1l1.500-.500L5.500 0h2L12 10.500l1.500.500v1H8.500v-1l1.200-.500L9 8.300H4.500L3.800 10.500 5 11v1zM5 7h3.500L6.800 2.700zM14 9.500h4L16 12z" /></svg></Glyph>
            <Picker label="Character Style" value="[None]" w={131} />
          </Line>
          <Line>
            <Glyph $w={24} />
            <Picker label="Language" value="Arabic" w={131} dark />
          </Line>
        </Stack>
        <Divider $h={37} $m="0 4px 0 6px" />
        <Divider $h={37} />
        <AlignBlock>
          <AlignRow>
            {["left", "center", "right", "jleft", "jcenter", "jright", "full", "towards", "away"].map((k) => (
              <ModeButton key={k} $on={k === "right"} aria-label={`Align ${k}`}><AlignIcon kind={k} /></ModeButton>
            ))}
          </AlignRow>
          <RowRule />
          <AlignRow>
            <ModeButton $w={24} aria-label="Left-to-right"><Pilcrow /></ModeButton>
            <ModeButton $on aria-label="Right-to-left"><Pilcrow flip /></ModeButton>
            <Spacer />
            <svg width="19" height="15" viewBox="0 0 19 15" fill="none" stroke={ink} strokeWidth="1.400"><path d="M1 15q0-5 3-6 4-1 4 1.500T4 12M8 11h4M12 11q0-3 2.500-3T17 10.500 12 11M8 4h9M10.500 1.500L8 4l2.500 2.500M14.500 1.500L17 4l-2.500 2.500" /></svg>
            <Picker label="Kashidas" value="Medium" w={102} dark />
            <Glyph $w={0} />
          </AlignRow>
        </AlignBlock>
        <Divider $h={37} $m="0 0 0 4px" />
        <Spacer />
        <svg width="12" height="18" viewBox="0 0 12 18"><path d="M7 0L1 9h4l-3 8 9-10H7l3-6z" fill={ink} /></svg>
        <Divider $h={37} $m="0 5px 0 8px" />
        <PanelMenuIcon />
        <Glyph $w={5} />
      </ControlBar>

      <Body>
        <Tools aria-label="Tools">
          <PanelHead><Chevrons /></PanelHead>
          <GripH />
          <ToolGap />
          {toolGroups.map((g, i) => (
            <React.Fragment key={i}>
              {g.map((t) => <ToolButton key={t} aria-label={t} $on={t === "Type"}><ToolIcon name={t} /></ToolButton>)}
              <ToolRule />
            </React.Fragment>
          ))}
          <ColorTools>
            <svg width="24" height="31" viewBox="0 0 24 31">
              <rect x="13" y="8" width="8" height="8" fill="none" stroke="#bbb" strokeWidth="1" /><rect x="14.500" y="9.500" width="5" height="5" fill="none" stroke="#111" strokeWidth="2" />
              <rect x="2.500" y=".500" width="11" height="12" fill="#fff" stroke="#999" /><path d="M3 12L13 1" stroke="#d80f16" strokeWidth="2" />
              <path d="M16 1.500h4v4M18 4l2 2 2-2" fill="none" stroke={ink} />
              <rect x="6" y="23" width="6" height="6" fill="none" stroke="#ccc" strokeWidth="2" /><rect x="6.500" y="23.500" width="5" height="5" fill="none" stroke="#111" /><rect x="2.500" y="19.500" width="6" height="6" fill="#eee" stroke="#222" /><path d="M3 25l5-5" stroke="#d80f16" />
            </svg>
            <svg width="24" height="14" viewBox="0 1 24 14"><path d="M0 1.500h24" stroke="#5a5a5a" /><rect x="2.500" y="4.500" width="8" height="8" fill="#444" stroke={ink} /><text x="15" y="13" fontFamily="Liberation Serif, serif" fontWeight="700" fontSize="12" fill={ink}>T</text></svg>
          </ColorTools>
          <ToolRule />
          <ToolButton $on aria-label="Apply None"><NoneSwatch /></ToolButton>
          <ToolRule />
          <ToolButton $on aria-label="Screen Mode">
            <svg width="22" height="20" viewBox="0 0 22 20"><rect x="5.500" y="5.500" width="11" height="9" fill="none" stroke={ink} /><path d="M6 7.500h10M8 9h3v2H8zM11 11h3v2h-3z" fill={ink} stroke={ink} strokeWidth=".800" /><path d="M21 14v4h-4z" fill="#fff" /></svg>
          </ToolButton>
        </Tools>

        <Doc>
          <TabBar><DocTab>*Untitled-1 @ 75%</DocTab></TabBar>
          <CanvasRow>
            <DocColumn>
              <RulerRow>
                <Corner><svg width="16" height="17"><path d="M1 8.500h14M4.500 1v15" stroke="#aaa" strokeDasharray="1 1" /></svg></Corner>
                <HRuler><HorizontalTicks /></HRuler>
              </RulerRow>
              <CanvasRow>
                <VRuler><VerticalTicks /></VRuler>
                <Canvas><PageSheet><MarginGuide /></PageSheet></Canvas>
              </CanvasRow>
              <Below />
            </DocColumn>
            <VScroll><VThumb /><Down w={9} /></VScroll>
          </CanvasRow>
          <StatusBar>
            <StatusIcon $w={22} aria-label="Settings">
              <svg width="20" height="11" viewBox="0 0 20 11"><rect width="19" height="11" rx="2" fill="#8c8c8c" /><circle cx="6" cy="5.500" r="2.600" fill="none" stroke="#222" strokeWidth="2" strokeDasharray="1.500 .500" /><path d="M12 2h2v4.500h-2zM12 7.500h2v2h-2z" fill="#222" /></svg>
            </StatusIcon>
            <StatusIcon $w={26} aria-label="Share">
              <svg width="14" height="12" viewBox="0 0 14 12"><path d="M5 2H1v9h10V8" fill="none" stroke={ink} strokeWidth="1.300" /><path d="M4 8q0-4 5-4.500V1l5 4-5 4V6.500Q6 6 4 8z" fill={ink} /></svg>
            </StatusIcon>
            <StatusIcon $w={13} aria-label="First"><Side left bar c="#8e8e8e" /></StatusIcon>
            <StatusIcon $w={14} aria-label="Previous"><Side left c="#8e8e8e" /></StatusIcon>
            <Glyph $w={6} />
            <StatusSelect $w={90}><select aria-label="Page" defaultValue="1"><option>1</option></select><Down /></StatusSelect>
            <Glyph $w={8} />
            <StatusIcon $w={13} aria-label="Next"><Side c="#8e8e8e" /></StatusIcon>
            <StatusIcon $w={14} aria-label="Last"><Side bar c="#8e8e8e" /></StatusIcon>
            <StatusIcon $w={25} aria-label="Open"><svg width="17" height="13" viewBox="0 0 17 13"><circle cx="6.500" cy="6.500" r="6.500" fill={ink} /><path d="M4 3h3l2.500 2.500V11H4z" fill="#eee" stroke="#222" strokeWidth="1.300" /><path d="M14 11h3l-1.500 2z" fill={ink} /></svg></StatusIcon>
            <Glyph $w={5} />
            <StatusSelect $w={112}><select aria-label="Profile" defaultValue="b"><option value="b">[Basic] (working)</option></select><Down /></StatusSelect>
            <Glyph $w={8} />
            <GreenDot />
            <StatusSelect $w={67}><select aria-label="Preflight" defaultValue="n"><option value="n">No errors</option></select><Down w={6} /></StatusSelect>
            <Glyph $w={4} />
            <HScroll>
              <Side left />
              <HTrack><HThumb /></HTrack>
              <Side />
            </HScroll>
            <StatusIcon $w={24} aria-label="Split"><svg width="15" height="12"><path d="M.500.500h14v11H.500zM7.500 1v10" fill="#303030" stroke={ink} /></svg></StatusIcon>
            <Resize c="#a8a8a8" />
            <Glyph $w={4} />
          </StatusBar>
        </Doc>

        <Dock>
          <PanelHead $end><Chevrons left /></PanelHead>
          {dockGroups.map((g) => (
            <DockGroup key={g[0]}>
              <GripH />
              {g.map((n) => (
                <DockItem key={n} $on={n === "Pages"}>
                  <svg width="20" height="19" viewBox="0 0 20 19">{dockIcons[n]}</svg>{n}
                </DockItem>
              ))}
            </DockGroup>
          ))}
        </Dock>
      </Body>

      <PagesPanel>
        <PanelTabs>
          <PanelTab $on $w={47}><svg width="7" height="9" viewBox="0 0 7 9" fill="none" stroke={ink}><path d="M.500 3.500l3-3 3 3zM.500 5.500l3 3 3-3z" /></svg>Pages</PanelTab>
          <PanelTab $w={44}>Layers</PanelTab>
          <PanelTab $w={40}>Links</PanelTab>
          <Spacer />
          <Chevrons />
          <Divider $h={11} $m="0 4px 0 7px" />
          <PanelMenuIcon />
          <Glyph $w={3} />
        </PanelTabs>
        <PanelPane $h={61}>
          <MasterList>
            <li><span>A-Master</span><svg width="35" height="24"><path d="M.500.500h34v23H.500z" fill="#fff" stroke="#888" /><path d="M17.500 1v22" stroke="#555" /></svg></li>
            <li><span>B-Master</span><svg width="35" height="24"><path d="M.500.500h34v23H.500z" fill="#666" stroke="#bbb" /><path d="M1 2.500l13 1M3 6l11 .500M1 9l9 .500M5 12l10-.500M1 15l12 .500M2 18l13-.500M1 21h8" stroke="#ddd" /><path d="M2 4.500l9 .500M1 10.500l10 .500M2 16.500l9 .500M19 4.500l8 .500M21 10.500l10 .500M19 13.500l8 .500M22 19.500l8 .500" stroke="#333" /><path d="M19 3l12-.500M22 7l10 .500M19 12l11-.500M21 16l11 .500M19 21h9" stroke="#aaa" /><path d="M16.500 1v22M33.500 1v22" stroke="#fff" strokeWidth="1.500" /></svg></li>
          </MasterList>
          <PanelScroll><Up /><PanelThumb /><Down w={7} /></PanelScroll>
        </PanelPane>
        <PanelSplit />
        <PanelPane $h={131}>
          <SpreadArea>
            <svg width="28" height="47" viewBox="0 0 28 47"><path d="M7 0h11l-5.500 5z" fill="#8c8c8c" /><path d="M.500 6.500h25v35H.500z" fill="#a3aab4" stroke="#8a8a8a" /><path d="M26.500 0v47" stroke="#8a8a8a" /><path d="M1 7h9v9H1z" fill="#fff" /><text x="1" y="15" fontFamily="DejaVu Sans Condensed, sans-serif" fontWeight="700" fontSize="9" fill="#000">A</text></svg>
            <PageNumber>1</PageNumber>
          </SpreadArea>
          <PanelScroll><Up c="#8c8c8c" /><Down w={7} c="#8c8c8c" /></PanelScroll>
        </PanelPane>
        <PanelFoot>
          <SpreadInfo>1 Page in 1 Spread</SpreadInfo>
          <button aria-label="Edit Page Size"><svg width="17" height="13" viewBox="0 0 17 13"><path d="M0 6h5v6H0zM6 6h7v6H6zM5 1h4v4H5zM9 0l4 2v4H9z" fill={ink} /><path d="M3 4l2-2M8 3l5 6" stroke="#222" /><path d="M13 10h4l-2 2z" fill={ink} /></svg></button>
          <button aria-label="New Page"><svg width="10" height="11" viewBox="0 0 10 11"><path d="M0 0h10v11H5V5H0z" fill={ink} /><path d="M0 6h4v4z" fill={ink} /></svg></button>
          <button aria-label="Delete Page"><svg width="11" height="12" viewBox="0 0 11 12" fill="none" stroke="#7c7c7c"><path d="M0 2.500h11M4 2V.500h3V2M1.500 4v7.500h8V4M3.500 4v7M5.500 4v7M7.500 4v7" /></svg></button>
          <FootEnd><Resize /></FootEnd>
        </PanelFoot>
        <PanelGrip><GripH /></PanelGrip>
      </PagesPanel>
      <LayoutMenu />
    </App_>
  );
}
